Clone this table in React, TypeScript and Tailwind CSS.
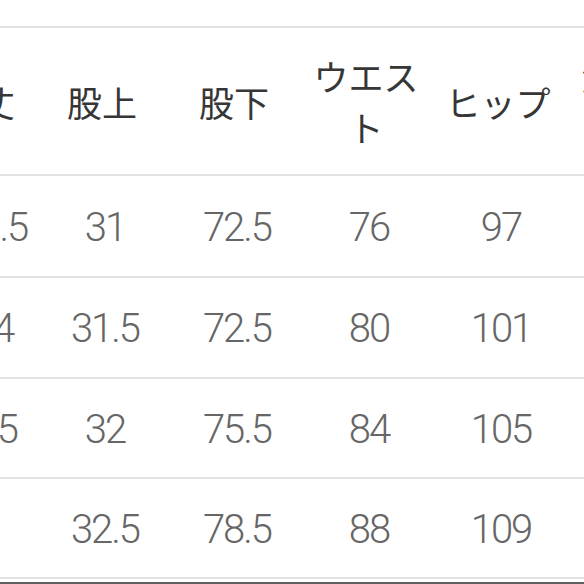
const headers: { label: string[]; w: string }[] = [
  { label: ['総丈'], w: 'w-[112px]' },
  { label: ['股上'], w: 'w-[132px]' },
  { label: ['股下'], w: 'w-[132px]' },
  { label: ['ウエス', 'ト'], w: 'w-[132px]' },
  { label: ['ヒップ'], w: 'w-[132px]' },
  { label: ['渡り幅', '(cm)'], w: 'w-[140px]' },
]

const rows: { h: string; cells: string[] }[] = [
  { h: 'h-[102px]', cells: ['100.5', '31', '72.5', '76', '97', '31'] },
  { h: 'h-[101px]', cells: ['104', '31.5', '72.5', '80', '101', '32'] },
  { h: 'h-[100px]', cells: ['99.5', '32', '75.5', '84', '105', '33'] },
  { h: 'h-[100px]', cells: ['91', '32.5', '78.5', '88', '109', '34'] },
]

export default function App() {
  return (
    <div className="w-[584px] h-[584px] overflow-hidden bg-white pt-[26px]">
      <div className="ml-[-76px] w-[780px]">
        <div className="flex h-[150px] border-y-2 border-[#e3e3e3] text-[35px] leading-[51px] text-[#363636] font-['Noto_Sans_CJK_JP',sans-serif]">
          {headers.map((c, i) => (
            <div key={i} className={`${c.w} flex flex-col items-center justify-center shrink-0`}>
              {c.label.map((l, j) => (
                <span key={j} className="whitespace-nowrap">{l}</span>
              ))}
            </div>
          ))}
        </div>
        {rows.map((r, i) => (
          <div
            key={i}
            className={`flex ${r.h} border-b-2 border-[#e3e3e3] text-[40px] font-light tracking-[-2px] text-[#666] font-['Roboto',sans-serif]`}
          >
            {r.cells.map((v, j) => (
              <div key={j} className={`${headers[j].w} flex items-center justify-center shrink-0 pt-[3px] pl-[6px]`}>
                {v}
              </div>
            ))}
          </div>
        ))}
        <div className="mt-[3px] h-[3px] bg-[#5f5f5f]" />
      </div>
    </div>
  )
}
